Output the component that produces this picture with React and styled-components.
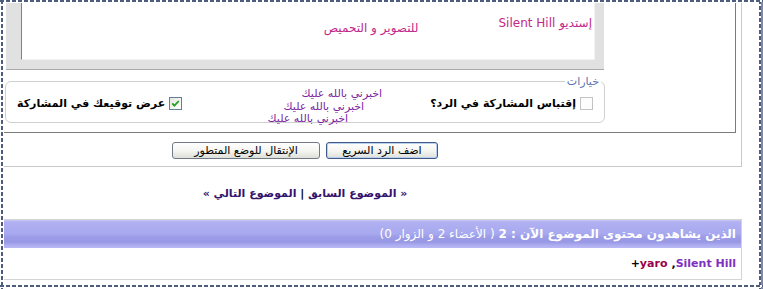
import React from 'react';
import styled, { createGlobalStyle } from 'styled-components';

const DASH = '#4e5c7e';
const FONT = 'Tahoma, "DejaVu Sans", sans-serif';

const GlobalStyle = createGlobalStyle`
  html, body {
    margin: 0;
    padding: 0;
    background: #ffffff;
  }
  body {
    font-family: ${FONT};
  }
`;

const Frame = styled.div`
  width: 763px;
  height: 289px;
  box-sizing: border-box;
  padding: 3px 0 0 4px;
  background-color: #ffffff;
  background-image:
    repeating-linear-gradient(90deg, ${DASH} 0 4px, #ffffff 4px 6px),
    repeating-linear-gradient(90deg, ${DASH} 0 4px, #ffffff 4px 6px),
    repeating-linear-gradient(180deg, ${DASH} 0 4px, #ffffff 4px 6px),
    repeating-linear-gradient(180deg, ${DASH} 0 4px, #ffffff 4px 6px),
    linear-gradient(#7d89a6, #7d89a6);
  background-size: 100% 2px, 100% 2px, 2px 100%, 2px 100%, 2px 100%;
  background-position: 0 0, 0 285px, 1px 0, 759px 0, 761px 0;
  background-repeat: no-repeat;
`;

const Viewport = styled.div`
  width: 755px;
  height: 282px;
  overflow: hidden;
`;

const Page = styled.div`
  width: 874px;
  margin: -23px 0 0 -136px;
  direction: rtl;
  font-size: 11px;
  color: #000;
`;

const Panel = styled.div`
  border: 1px solid #c9c9c9;
  padding: 4px 5px 7px;
  background: #ffffff;
`;

const InnerBox = styled.div`
  border: 1px solid #7b7b7b;
  padding: 4px 5px 9px;
  display: flex;
  flex-direction: column;
  align-items: center;
`;

const Editor = styled.div`
  width: 598px;
  box-sizing: border-box;
  background: #e1e1e1;
  padding: 10px 9px 9px 15px;
  border-bottom: 1px solid #a9a9a9;
`;

const EditArea = styled.div`
  height: 60px;
  box-sizing: border-box;
  background: #ffffff;
  border-style: solid;
  border-width: 1px;
  border-color: #808080 #f2f2f2 #f2f2f2 #808080;
  padding: 15px 2px 0;
  display: flex;
  gap: 80px;
  color: #c2288a;
  font-size: 12px;
`;

const EditLine = styled.span`
  padding-top: ${(p) => p.$drop || 0}px;
  white-space: nowrap;
`;

const Options = styled.fieldset`
  width: 600px;
  box-sizing: border-box;
  margin: 5px 0 0;
  padding: 0 3px 3px;
  border: 1px solid #d0d0d0;
  border-radius: 6px;
  min-inline-size: 0;
`;

const Legend = styled.legend`
  padding: 0 2px;
  line-height: 13px;
  color: #5a73b4;
  font-size: 11px;
`;

const OptionsRow = styled.div`
  display: grid;
  grid-template-columns: auto 1fr auto;
  align-items: center;
  height: 31px;
  padding: 0 8px;
`;

const CheckLabel = styled.label`
  display: flex;
  align-items: center;
  gap: 4px;
  font-weight: bold;
  white-space: nowrap;
`;

const Box = styled.span`
  width: 13px;
  height: 13px;
  box-sizing: border-box;
  display: inline-flex;
  align-items: center;
  justify-content: center;
  border: 1px solid ${(p) => (p.$checked ? '#5f7f9c' : '#c3c3c3')};
  background: ${(p) =>
    p.$checked ? 'linear-gradient(135deg, #e6e6e0, #ffffff)' : '#fcfcfc'};
`;

const Marquee = styled.div`
  align-self: start;
  height: 31px;
  padding-right: 48px;
  display: flex;
  flex-direction: column;
  color: #7a1fa2;
  font-size: 11px;
  line-height: 12.5px;
`;

const MarqueeLine = styled.span`
  margin-right: ${(p) => p.$shift}px;
  white-space: nowrap;
`;

const Buttons = styled.div`
  display: flex;
  justify-content: center;
  gap: 6px;
  margin-top: 9px;
`;

const Button = styled.button`
  width: ${(p) => p.$width}px;
  height: 17px;
  padding: 0;
  border: 1px solid ${(p) => (p.$default ? '#3f5a86' : '#707a86')};
  border-radius: 3px;
  background: linear-gradient(#ffffff, #f4f4f0 55%, #dedfd8);
  box-shadow: ${(p) => (p.$default ? 'inset 0 0 0 1px #b9d0f0' : 'none')};
  font-family: ${FONT};
  font-size: 11px;
  color: #000;
  direction: rtl;
`;

const NavLinks = styled.div`
  padding: 20px 0 18px;
  line-height: 14px;
  text-align: center;
  font-weight: bold;
`;

const NavLink = styled.a`
  color: #34136c;
  text-decoration: none;
`;

const Viewers = styled.div`
  border: 1px solid #d4d4d4;
`;

const ViewersBar = styled.div`
  height: 28px;
  padding: 0 5px;
  display: flex;
  align-items: center;
  color: #ffffff;
  font-size: 12px;
  background: linear-gradient(
    180deg,
    #c9c9f7 0,
    #b0b0f2 2px,
    #a8a8ef 14px,
    #9b9be7 17px,
    #9898e4 22px,
    #acacf0 25px,
    #b9b9f4 28px
  );
`;

const ViewersRow = styled.div`
  height: 31px;
  padding: 0 5px;
  display: flex;
  align-items: center;
  font-weight: bold;
  font-size: 11px;
`;

const Member = styled.a`
  color: ${(p) => p.$color};
  text-decoration: none;
  margin-right: ${(p) => p.$gap || 0}px;
  direction: ltr;
`;

function CheckBox({ checked }) {
  return (
    <Box $checked={checked}>
      {checked && (
        <svg width="9" height="9" viewBox="0 0 9 9">
          <path
            d="M1.2 4.4 L3.4 6.6 L7.8 2"
            fill="none"
            stroke="#21a121"
            strokeWidth="1.8"
          />
        </svg>
      )}
    </Box>
  );
}

export default function App() {
  return (
    <Frame>
      <GlobalStyle />
      <Viewport>
        <Page>
          <Panel>
            <InnerBox>
              <Editor>
                <EditArea>
                  <EditLine>إستديو Silent Hill</EditLine>
                  <EditLine $drop={5}>للتصوير و التحميص</EditLine>
                </EditArea>
              </Editor>

              <Options>
                <Legend>خيارات</Legend>
                <OptionsRow>
                  <CheckLabel>
                    <CheckBox />
                    إقتباس المشاركة في الرد؟
                  </CheckLabel>
                  <Marquee>
                    <MarqueeLine $shift={0}>اخبرني بالله عليك</MarqueeLine>
                    <MarqueeLine $shift={18}>اخبرني بالله عليك</MarqueeLine>
                    <MarqueeLine $shift={34}>اخبرني بالله عليك</MarqueeLine>
                  </Marquee>
                  <CheckLabel>
                    <CheckBox checked />
                    عرض توقيعك في المشاركة
                  </CheckLabel>
                </OptionsRow>
              </Options>
            </InnerBox>

            <Buttons>
              <Button $width={112} $default>
                اضف الرد السريع
              </Button>
              <Button $width={148}>الإنتقال للوضع المتطور</Button>
            </Buttons>
          </Panel>

          <NavLinks>
            <NavLink href="#">« الموضوع السابق</NavLink> |{' '}
            <NavLink href="#">الموضوع التالي »</NavLink>
          </NavLinks>

          <Viewers>
            <ViewersBar>
              <b>الذين يشاهدون محتوى الموضوع الآن : 2</b>&nbsp;( الأعضاء 2 و
              الزوار 0)
            </ViewersBar>
            <ViewersRow>
              <Member href="#" $color="#8030c0">
                Silent Hill
              </Member>
              <span>,</span>
              <Member href="#" $color="#99004d" $gap={4}>
                yaro
              </Member>
              <span>+</span>
            </ViewersRow>
          </Viewers>
        </Page>
      </Viewport>
    </Frame>
  );
}
